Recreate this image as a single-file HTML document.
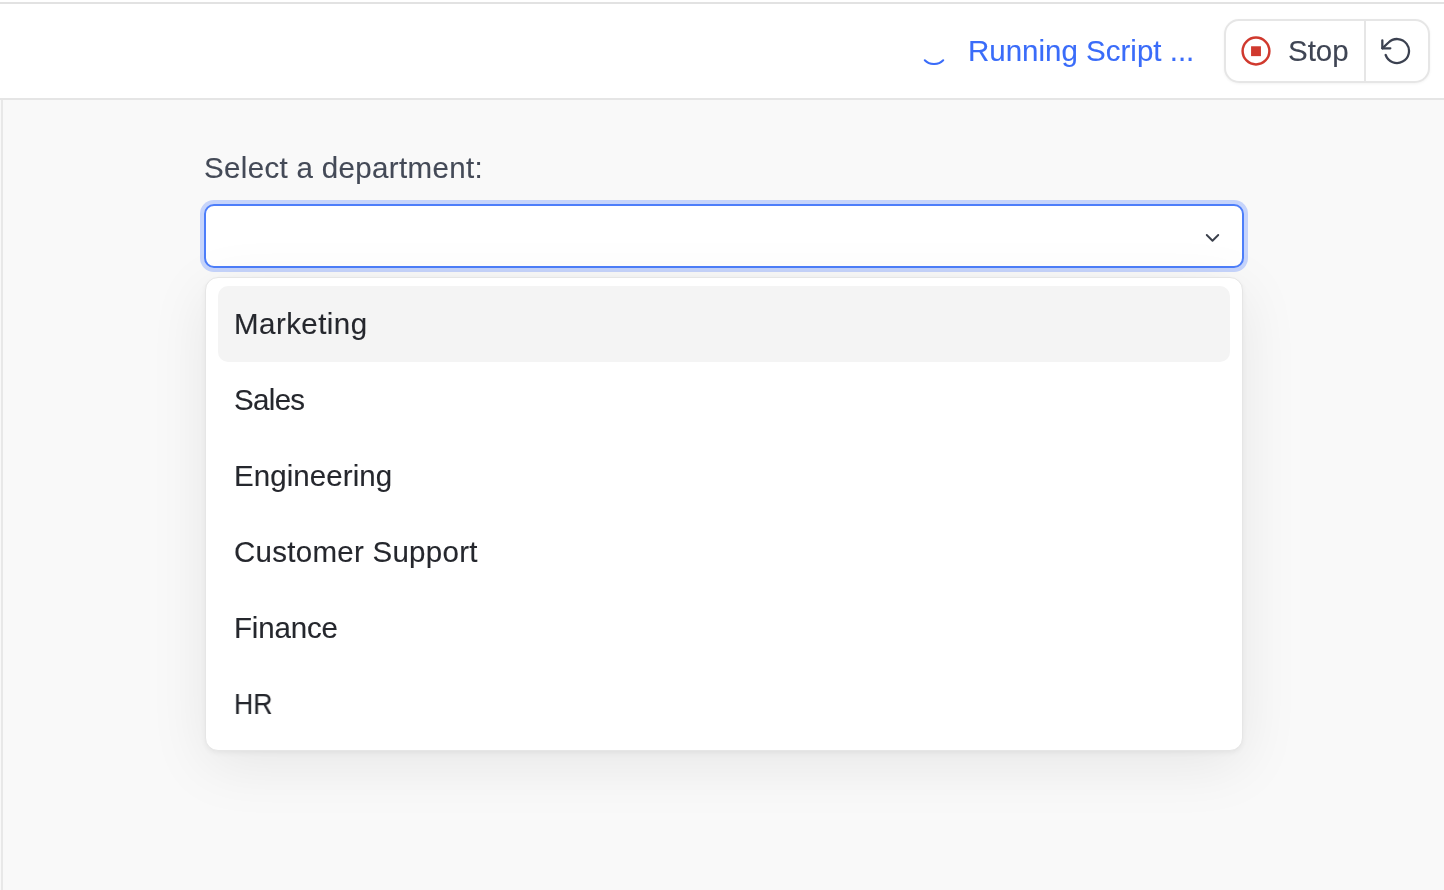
<!DOCTYPE html>
<html><head><meta charset="utf-8">
<style>
*{box-sizing:border-box;margin:0;padding:0}
html,body{width:1444px;height:890px;overflow:hidden;background:#fff;font-family:"Liberation Sans",sans-serif}
.topline{position:absolute;left:0;top:2px;width:1444px;height:2px;background:#e2e2e2}
.header{position:absolute;left:0;top:0;width:1444px;height:98px;background:#fff}
.hline{position:absolute;left:0;top:98px;width:1444px;height:2px;background:#e5e5e5}
.content{position:absolute;left:0;top:100px;width:1444px;height:790px;background:#f9f9f9}
.vline{position:absolute;left:1px;top:100px;width:2px;height:790px;background:#e8e8e8}
.t{position:absolute;white-space:nowrap;font-size:29.5px;line-height:32px;will-change:transform;-webkit-text-stroke:0.12px currentColor}
.spinner{position:absolute;left:919.5px;top:37px;width:28px;height:28px}
.running{color:#3a6cf9}
.btngroup{position:absolute;left:1224px;top:19px;width:206px;height:64px;border:2px solid #e6e6e6;border-radius:15px;background:#fff;box-shadow:0 1px 3px rgba(0,0,0,0.05)}
.divider{position:absolute;left:1364px;top:19px;width:2px;height:64px;background:#e6e6e6}
.label{color:#444a57}
.input{position:absolute;left:204px;top:204px;width:1040px;height:64px;border:2px solid #4d7efa;border-radius:10px;background:#fff;box-shadow:0 0 0 4px #c6d4fb}
.menu{position:absolute;left:205px;top:277px;width:1038px;height:474px;background:#fff;border:1px solid #e6e6e6;border-radius:13px;box-shadow:0 2px 5px rgba(0,0,0,0.05),0 14px 60px rgba(0,0,0,0.08)}
.hl{position:absolute;left:218px;top:286px;width:1012px;height:76px;background:#f4f4f4;border-radius:10px}
.item{color:#25272d}
</style></head>
<body>
<div class="header"></div>
<div class="topline"></div>
<div class="hline"></div>
<div class="content"></div>
<div class="vline"></div>

<svg class="spinner" viewBox="0 0 28 28"><path d="M4.8 23.2 A13 13 0 0 0 23.2 23.2" fill="none" stroke="#3a6cf9" stroke-width="2" stroke-linecap="round"/></svg>
<div class="t running" id="running" style="left:968px;top:35px">Running Script ...</div>

<div class="btngroup"></div>
<div class="divider"></div>
<svg style="position:absolute;left:1240px;top:35px;width:32px;height:32px" viewBox="0 0 24 24" fill="none" stroke="#d0392e" stroke-width="1.85"><circle cx="12" cy="12" r="10.05"/><rect x="8.3" y="8.45" width="7.4" height="7.4" fill="#d0392e" stroke="none"/></svg>
<div class="t" id="stop" style="left:1288px;top:35px;color:#3f4554">Stop</div>
<svg style="position:absolute;left:1381px;top:35px;width:32px;height:32px" viewBox="0 0 24 24" fill="none" stroke="#3b4150" stroke-width="1.7" stroke-linecap="round" stroke-linejoin="round"><polyline points="1 4 1 10 7 10"/><path d="M3.51 15a9 9 0 1 0 2.13-9.36L1 10"/></svg>

<div class="t label" id="label" style="left:204px;top:152px;letter-spacing:0.34px">Select a department:</div>
<div class="input"></div>
<svg style="position:absolute;left:1204px;top:230px;width:17px;height:17px" viewBox="0 0 17 17" fill="none" stroke="#3a3f4b" stroke-width="1.9" stroke-linecap="round" stroke-linejoin="round"><polyline points="2.75 5 8.5 10.75 14.25 5"/></svg>

<div class="menu"></div>
<div class="hl"></div>
<div class="t item" id="i1" style="left:234px;top:308px;letter-spacing:0.45px">Marketing</div>
<div class="t item" id="i2" style="left:234px;top:384px;letter-spacing:-0.67px">Sales</div>
<div class="t item" id="i3" style="left:234px;top:460px;letter-spacing:0.08px">Engineering</div>
<div class="t item" id="i4" style="left:234px;top:536px;letter-spacing:0.27px">Customer Support</div>
<div class="t item" id="i5" style="left:234px;top:612px;letter-spacing:-0.17px">Finance</div>
<div class="t item" id="i6" style="left:234px;top:688px;transform:scaleX(0.905);transform-origin:0 0">HR</div>
</body></html>
